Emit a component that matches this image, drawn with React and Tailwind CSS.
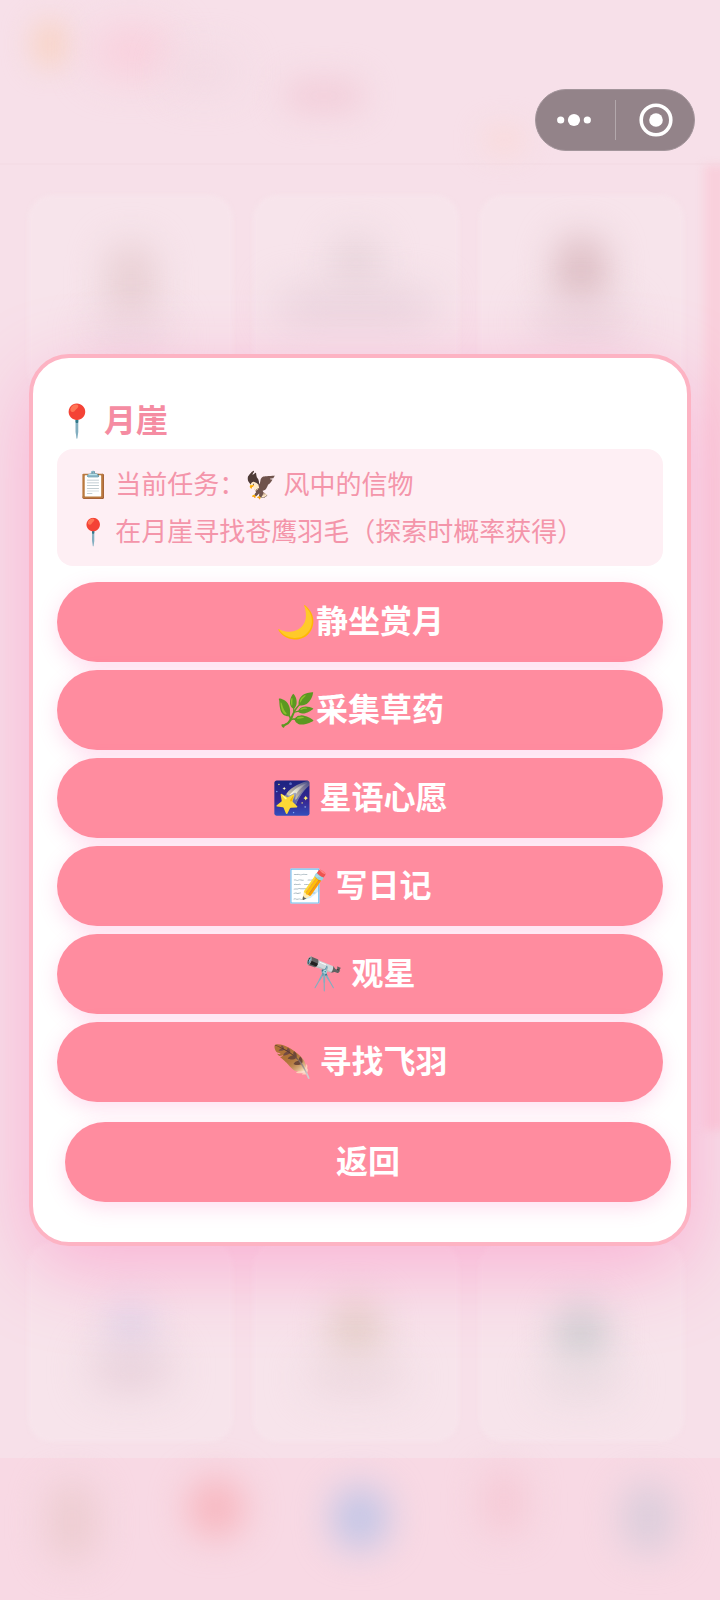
import React from 'react';

const actions = [
  '🌙静坐赏月',
  '🌿采集草药',
  '🌠 星语心愿',
  '📝 写日记',
  '🔭 观星',
  '🪶 寻找飞羽',
];

const topCards = [
  { icon: 'mt-12 h-20 w-12 bg-[#e8cfd3]', label: 'h-6 w-20 bg-[#ecd7e0]' },
  { icon: 'mt-10 h-14 w-12 bg-[#e8d4db]', label: 'h-8 w-40 bg-[#e8d2dc]' },
  { icon: 'mt-10 h-18 w-13 bg-[#ddbec4]', label: 'h-8 w-24 bg-[#ead3dc]' },
];

const bottomCards = [
  { icon: 'mt-15 h-12 w-11 bg-[#dfd5ea]', label: 'h-10 w-20 bg-[#e7d0da]' },
  { icon: 'mt-14 h-16 w-13 bg-[#e5d1ca]', label: 'h-8 w-24 bg-[#ecd7de]' },
  { icon: 'mt-15 h-16 w-13 bg-[#d0d0d3]', label: 'h-8 w-20 bg-[#e9dae0]' },
];

const tabs = [
  'mt-6 h-20 w-12 bg-[#ecccd0]',
  'mt-5 h-15 w-14 bg-[#f7b5bd]',
  'mt-7 h-16 w-14 bg-[#c0c5e6]',
  'mt-3 h-16 w-10 bg-[#f5c8d4]',
  'mt-6 h-18 w-13 bg-[#dacddb]',
];

const buttonClass =
  'block h-20 w-full rounded-full bg-[#ff8c9f] pb-1.5 text-[32px] font-bold leading-none text-white shadow-[0_6px_20px_rgba(255,105,180,0.22)]';

function CardRow({ cards }) {
  return (
    <div className="grid grid-cols-3 gap-5">
      {cards.map((card, i) => (
        <div key={i} className="relative flex h-[200px] flex-col items-center">
          <div className="absolute inset-0 rounded-3xl bg-[#f7e4eb] blur-[2px]" />
          <div className={`relative rounded-full blur-[18px] ${card.icon}`} />
          <div className={`relative rounded-full blur-[20px] ${card.label}`} />
        </div>
      ))}
    </div>
  );
}

function Backdrop() {
  return (
    <div className="absolute inset-0 flex flex-col overflow-hidden bg-[#f7e0e9]" aria-hidden="true">
      <div className="flex h-[165px] shrink-0 items-start border-b-2 border-[#f5dde6] pl-8">
        <div className="mt-5 h-12 w-9 rounded-full bg-[#f8d4c6] blur-[14px]" />
        <div className="ml-6 mt-7 h-12 w-20 rounded-full bg-[#f9cfdc] blur-[20px]" />
        <div className="mt-14 h-8 w-16 rounded-full bg-[#f1d8e2] blur-[20px]" />
        <div className="ml-12 mt-20 h-8 w-20 rounded-full bg-[#f2cdd9] blur-[16px]" />
        <div className="ml-30 mt-32 h-6 w-10 rounded-full bg-[#fadad8] blur-[14px]" />
      </div>
      <div className="flex min-h-0 flex-1">
        <div className="flex min-w-0 flex-1 flex-col justify-between pb-4 pl-7 pr-5 pt-[30px]">
          <CardRow cards={topCards} />
          <CardRow cards={bottomCards} />
        </div>
        <div className="-mr-2 h-[965px] w-6 bg-[#f9d0dc] blur-[5px]" />
      </div>
      <div className="grid h-[142px] shrink-0 grid-cols-5 justify-items-center bg-[#f8d9e4]">
        {tabs.map((tab) => (
          <div key={tab} className={`rounded-full blur-[18px] ${tab}`} />
        ))}
      </div>
    </div>
  );
}

function Capsule() {
  return (
    <div className="absolute right-[25px] top-[89px] flex h-[62px] w-40 items-center rounded-full border border-[#a3959b] bg-[#938389]">
      <button type="button" aria-label="更多" className="flex h-full flex-1 items-center justify-center">
        <svg width="36" height="14" viewBox="0 0 36 14" fill="#fff">
          <circle cx="3.7" cy="7" r="3.6" />
          <circle cx="17" cy="7" r="6.1" />
          <circle cx="30.3" cy="7" r="3.6" />
        </svg>
      </button>
      <div className="h-10 w-px bg-[#b3a8ac]" />
      <button type="button" aria-label="关闭" className="flex h-full flex-1 items-center justify-center">
        <svg width="36" height="34" viewBox="0 0 36 34" fill="none">
          <circle cx="19" cy="17" r="14.8" stroke="#fff" strokeWidth="3.6" />
          <circle cx="19" cy="17" r="6.8" fill="#fff" />
        </svg>
      </button>
    </div>
  );
}

export default function App() {
  return (
    <div className="relative flex min-h-screen items-center px-[29px] font-['Noto_Sans_CJK_SC','Noto_Color_Emoji',sans-serif]">
      <Backdrop />

      <div
        role="dialog"
        aria-labelledby="place-title"
        className="relative w-full rounded-[40px] border-4 border-[#fdb3c3] bg-white px-6 pb-10 pt-[37px] shadow-[0_24px_80px_rgba(255,105,180,0.4)]"
      >
        <h1 id="place-title" className="mb-2 text-[32px] font-bold leading-[46px] text-[#f58ca2]">
          📍 月崖
        </h1>

        <div className="mb-4 rounded-2xl bg-[#feeff4] px-5 pb-[13px] pt-[10px] text-[26px] leading-[47px] text-[#f495aa]">
          <p>📋 当前任务：🦅 风中的信物</p>
          <p>📍 在月崖寻找苍鹰羽毛（探索时概率获得）</p>
        </div>

        <div className="flex flex-col gap-2">
          {actions.map((label) => (
            <button key={label} type="button" className={buttonClass}>
              {label}
            </button>
          ))}
        </div>

        <div className="-mr-2 ml-2 mt-5">
          <button type="button" className={buttonClass}>
            返回
          </button>
        </div>
      </div>

      <Capsule />
    </div>
  );
}
